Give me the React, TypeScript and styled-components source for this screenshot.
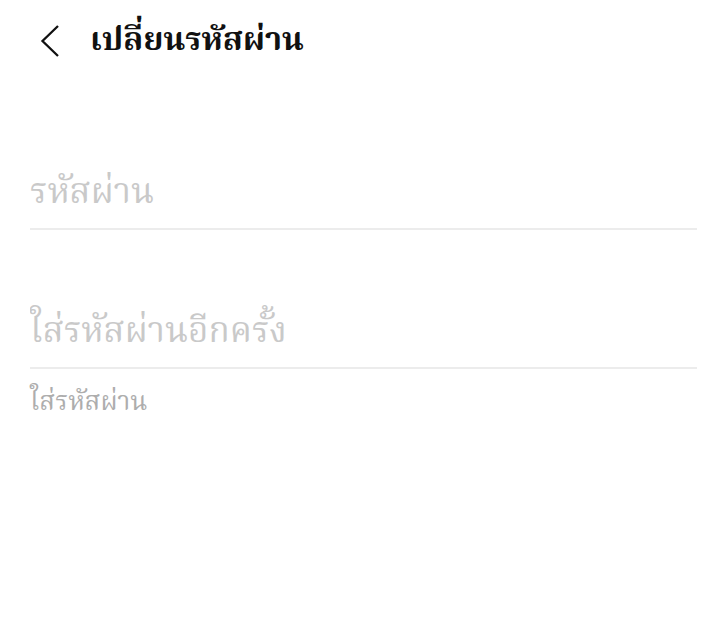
import React from 'react';
import styled, { createGlobalStyle } from 'styled-components';

const GlobalStyle = createGlobalStyle`
  html, body {
    margin: 0;
    padding: 0;
    background: #ffffff;
  }
  body {
    font-family: 'Noto Serif Thai', 'Noto Sans Thai', sans-serif;
  }
`;

const Page = styled.div`
  width: 728px;
  min-height: 631px;
  background: #fff;
`;

const Header = styled.header`
  display: flex;
  align-items: center;
  height: 82px;
  padding-left: 38px;
  gap: 28px;
`;

const BackButton = styled.button`
  border: 0;
  background: none;
  padding: 0;
  width: 24px;
  height: 36px;
  display: flex;
  align-items: center;
  cursor: pointer;
`;

const Title = styled.h1`
  margin: 0;
  font-size: 32.5px;
  font-weight: 700;
  line-height: 40px;
  color: #111;
`;

const Form = styled.form`
  display: flex;
  flex-direction: column;
  padding: 0 31px 0 30px;
  margin-top: 82px;
`;

const Field = styled.label<{ $gap?: number }>`
  display: block;
  margin-top: ${(p) => p.$gap ?? 0}px;
  border-bottom: 2px solid #ececec;
`;

const Input = styled.input`
  display: block;
  width: 100%;
  border: 0;
  outline: none;
  padding: 5px 0 9px;
  margin: 0;
  background: transparent;
  font-family: inherit;
  font-size: 35px;
  line-height: 50px;
  color: #333;

  &::placeholder {
    color: #c9c9c9;
  }
`;

const Hint = styled.p`
  margin: 13px 0 0;
  font-size: 26px;
  color: #adadad;
`;

export default function App() {
  return (
    <Page>
      <GlobalStyle />
      <Header>
        <BackButton type="button" aria-label="back">
          <svg width="24" height="36" viewBox="0 0 24 36" fill="none">
            <path d="M20 3 L4.5 18 L20 33" stroke="#111" strokeWidth="2.3" />
          </svg>
        </BackButton>
        <Title>เปลี่ยนรหัสผ่าน</Title>
      </Header>
      <Form>
        <Field>
          <Input type="password" placeholder="รหัสผ่าน" />
        </Field>
        <Field $gap={73}>
          <Input type="password" placeholder="ใส่รหัสผ่านอีกครั้ง" />
        </Field>
        <Hint>ใส่รหัสผ่าน</Hint>
      </Form>
    </Page>
  );
}
